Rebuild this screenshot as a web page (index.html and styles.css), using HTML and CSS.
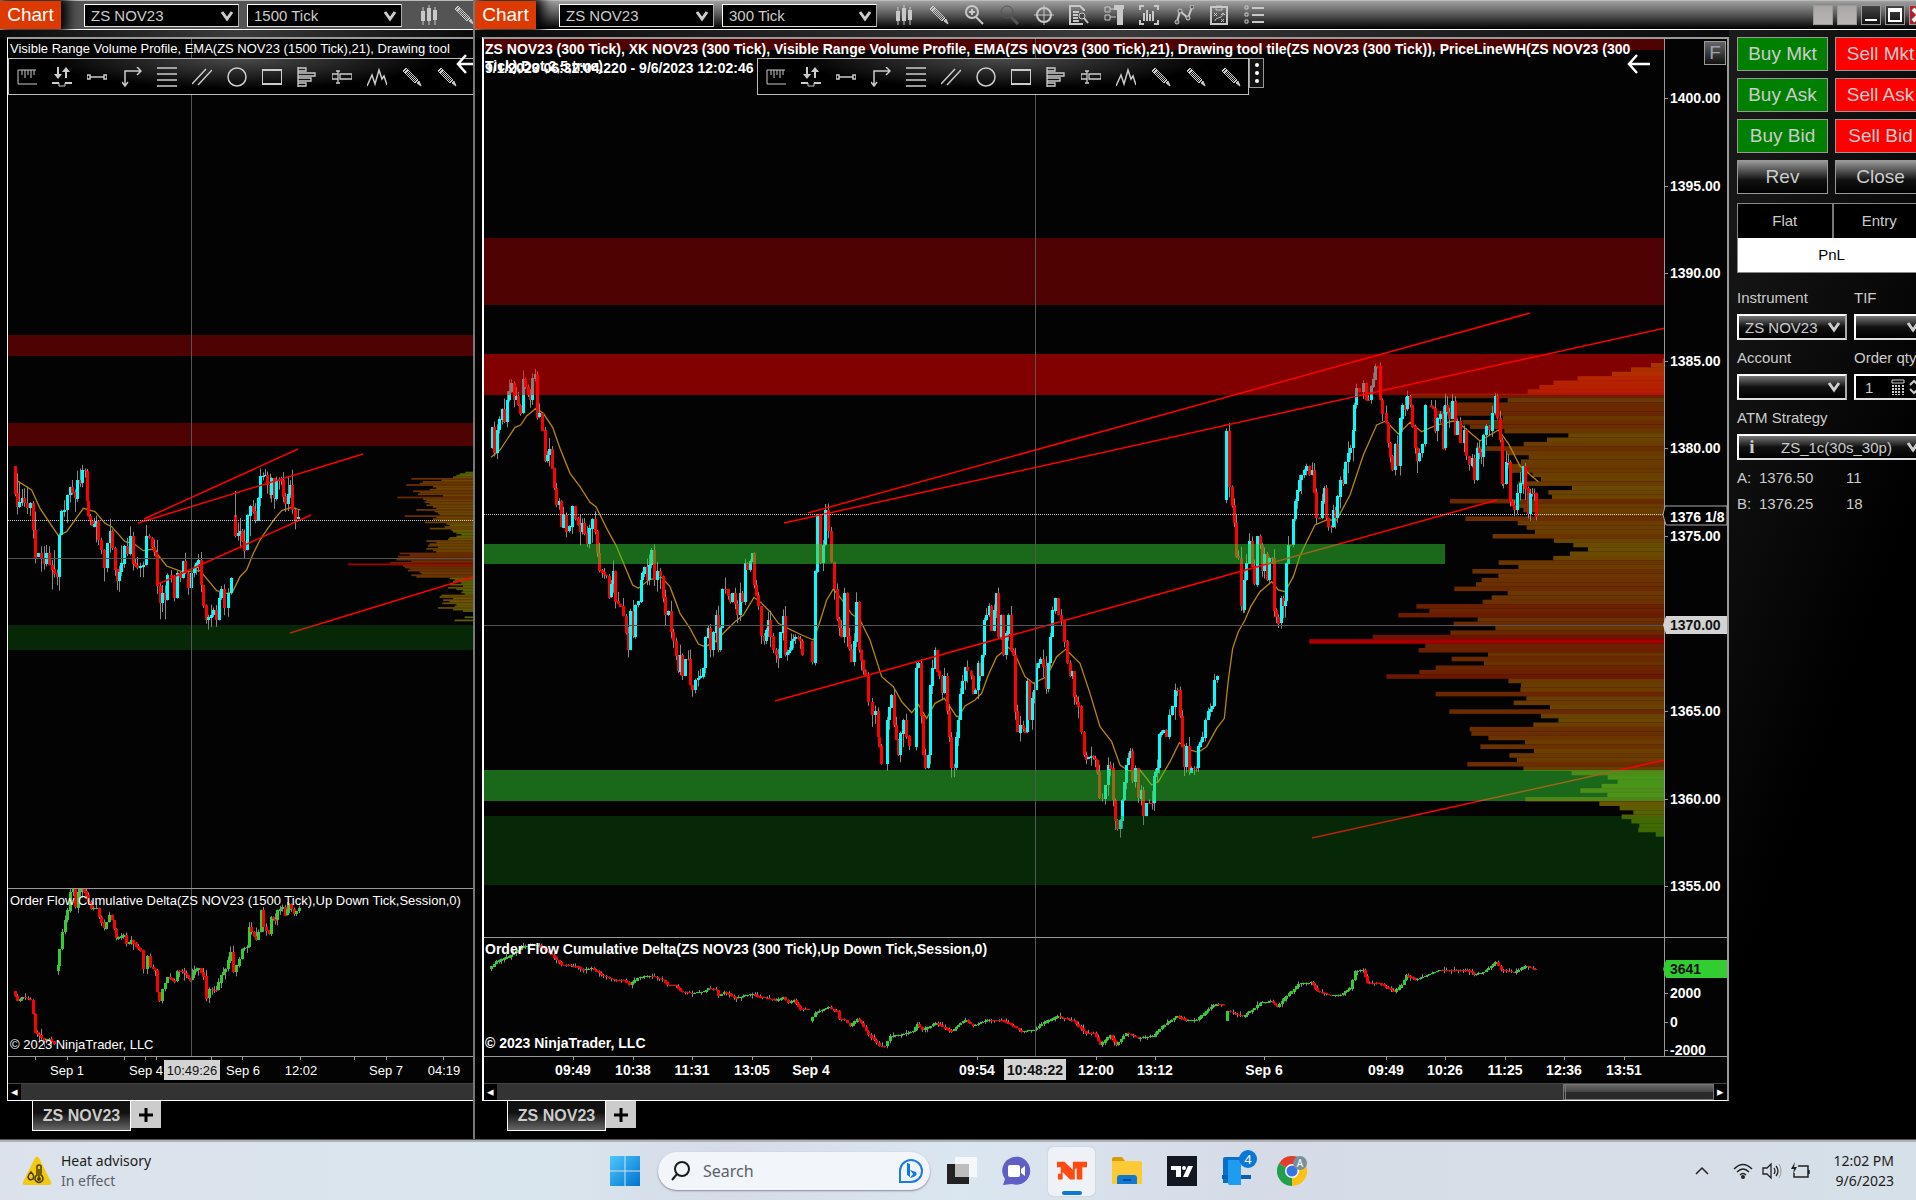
FILE: index.html
```html
<!DOCTYPE html>
<html lang="en">
<head>
<meta charset="utf-8">
<title>Chart - ZS NOV23</title>
<link rel="stylesheet" href="styles.css">
</head>
<body>
<svg class="sprite" aria-hidden="true">
  <symbol id="candles" viewBox="0 0 20 20"><path d="M4 2v18M10 0v20M16 2v18" stroke="currentColor"/><path d="M2 6h4v10H2zM8 3h4v13H8zM14 5h4v10h-4z" fill="currentColor"/></symbol>
  <symbol id="pencil" viewBox="0 0 20 20"><path d="M1 4l3-3 12 12-3 3z" fill="none" stroke="currentColor"/><path d="M2 3l12 12M3 2l12 12M15 16l2-2 2 5zM3 6l3-3" stroke="currentColor" fill="currentColor"/></symbol>
  <symbol id="zoomin" viewBox="0 0 20 20"><circle cx="8" cy="7" r="6" fill="none" stroke="currentColor" stroke-width="2"/><path d="M5 7h6M8 4v6M12 12l7 7" stroke="currentColor" stroke-width="2"/></symbol>
  <symbol id="zoomout" viewBox="0 0 20 20"><circle cx="8" cy="7" r="6" fill="none" stroke="currentColor"/><path d="M12 12l7 7" stroke="currentColor" stroke-width="3"/></symbol>
  <symbol id="target" viewBox="0 0 20 20"><circle cx="10" cy="10" r="7" fill="none" stroke="currentColor" stroke-width="2"/><path d="M10 0v20M0 10h20" stroke="currentColor"/></symbol>
  <symbol id="docfind" viewBox="0 0 20 20"><path d="M15 6V5l-4-4H1v18h13M4 7h6M4 10h5M4 13h5M4 16h6" fill="none" stroke="currentColor" stroke-width="2"/><circle cx="13" cy="11" r="3" fill="#444" stroke="currentColor"/><path d="M15 13l4 5" stroke="currentColor" stroke-width="2"/></symbol>
  <symbol id="dock" viewBox="0 0 20 20"><path d="M1 2h5v5H1zM1 10h5v5H1zM6 4h6M6 12h6" fill="none" stroke="currentColor"/><path d="M10 0h10v4h-1v16h-6V5h-3z" fill="currentColor"/></symbol>
  <symbol id="barsbox" viewBox="0 0 20 20"><path d="M5 1H1v4M15 1h4v4M1 15v4h4M15 19h4v-4M5 8v8M8 5v11M11 9v7M14 6v10" fill="none" stroke="currentColor" stroke-width="2"/></symbol>
  <symbol id="nodes" viewBox="0 0 20 20"><path d="M3 17L6 6l8 7 4-11" fill="none" stroke="currentColor" stroke-width="2"/><g fill="#555" stroke="currentColor"><circle cx="3" cy="17" r="2"/><circle cx="6" cy="6" r="2"/><circle cx="14" cy="13" r="2"/><circle cx="18" cy="2" r="2"/></g></symbol>
  <symbol id="plan" viewBox="0 0 20 20"><path d="M2 2h16v17H2z" fill="none" stroke="currentColor" stroke-width="2"/><path d="M7 1h6v4H7zM5 8l3 3M8 8l-3 3M12 14l3 3M15 14l-3 3M6 16c0-4 7-2 8-7M12 10l2-2 2 2" fill="none" stroke="currentColor"/></symbol>
  <symbol id="list" viewBox="0 0 20 20"><path d="M1 1h3v3H1zM1 8h3v3H1zM1 15h3v3H1z" fill="none" stroke="currentColor"/><path d="M8 3h12M8 10h12M8 17h12" stroke="currentColor" stroke-width="2"/></symbol>
  <symbol id="ruler" viewBox="0 0 20 20"><path d="M20 17H1V3h18M5 3v5M8 3v8M11 3v5M14 3v8M17 3v5" fill="none" stroke="currentColor"/></symbol>
  <symbol id="updown" viewBox="0 0 20 20"><path d="M6 0v8M14 3v8" stroke="currentColor" stroke-width="2"/><path d="M2 7h8l-4 5zM10 5h8l-4-5zM0 15h7v2H0zM13 15h7v2h-7z" fill="currentColor"/><path d="M7 16v3h6v-3" fill="none" stroke="currentColor"/></symbol>
  <symbol id="segment" viewBox="0 0 20 20"><path d="M0 8h3v4H0zM17 8h3v4h-3zM3 10h14" fill="none" stroke="currentColor" stroke-width="1.5"/></symbol>
  <symbol id="elbow" viewBox="0 0 20 20"><path d="M3 18V4h15M0 15l3 4 3-4M15 0l4 4-4 4" fill="none" stroke="currentColor" stroke-width="1.5"/></symbol>
  <symbol id="lines" viewBox="0 0 20 20"><path d="M0 1h20M0 7h20M0 13h20M0 19h20" stroke="currentColor" stroke-width="1.5"/></symbol>
  <symbol id="parallel" viewBox="0 0 20 20"><path d="M0 17L14 2M6 18L20 3" stroke="currentColor" stroke-width="1.5"/></symbol>
  <symbol id="circle" viewBox="0 0 20 20"><circle cx="10" cy="10" r="9" fill="none" stroke="currentColor" stroke-width="1.5"/></symbol>
  <symbol id="rect" viewBox="0 0 20 20"><path d="M0 3h20v14H0z" fill="none" stroke="currentColor" stroke-width="2"/></symbol>
  <symbol id="profile" viewBox="0 0 20 20"><path d="M1 0v20M1 1h8v3H1M1 6h17v3H1M1 11h13v3H1M1 16h8v3H1" fill="none" stroke="currentColor" stroke-width="1.3"/></symbol>
  <symbol id="slider" viewBox="0 0 20 20"><path d="M6 4v12M4 4h4M4 16h4M0 7h6M0 12h6M0 7v5M8 7h12v5H8z" fill="none" stroke="currentColor" stroke-width="1.3"/></symbol>
  <symbol id="mountain" viewBox="0 0 20 20"><path d="M0 19l5-11 3 9 4-14 3 9 2-3 3 9" fill="none" stroke="currentColor" stroke-width="1.5"/></symbol>
  <symbol id="chev" viewBox="0 0 14 12"><path d="M2 2l5 7 5-7" fill="none" stroke="currentColor" stroke-width="3"/></symbol>
  <symbol id="back" viewBox="0 0 24 20"><path d="M23 10H2M10 1l-8 9 8 9" fill="none" stroke="#fff" stroke-width="2.5"/></symbol>
</svg>

<main class="desk">
  <section class="win win-left">
    <header class="bar">
      <span class="badge">Chart</span>
      <label class="combo wide"><select aria-label="Instrument"><option>ZS NOV23</option></select><svg><use href="#chev"/></svg></label>
      <label class="combo wide"><select aria-label="Interval"><option>1500 Tick</option></select><svg><use href="#chev"/></svg></label>
      <div class="icons"><svg><use href="#candles"/></svg><svg><use href="#pencil"/></svg></div>
    </header>
    <div class="col">
      <div class="panel">
        <div class="title">Visible Range Volume Profile, EMA(ZS NOV23 (1500 Tick),21), Drawing tool</div>
        <div class="tools" id="tools-left"></div>
        <svg class="arrow arrow-left"><use href="#back"/></svg>
        <svg class="price" id="price-left"></svg>
        <svg class="delta delta-left" id="delta-left"></svg>
        <svg class="time" id="time-left"></svg>
        <div class="scroll"><button aria-label="Scroll left">◂</button></div>
      </div>
      <nav class="tabs"><button class="tab">ZS NOV23</button><button class="plus" aria-label="Add tab"><svg viewBox="0 0 14 14"><path d="M7 0v14M0 7h14" stroke="#000" stroke-width="3"/></svg></button></nav>
    </div>
  </section>

  <section class="win win-right">
    <header class="bar">
      <span class="badge">Chart</span>
      <label class="combo wide"><select aria-label="Instrument"><option>ZS NOV23</option></select><svg><use href="#chev"/></svg></label>
      <label class="combo wide"><select aria-label="Interval"><option>300 Tick</option></select><svg><use href="#chev"/></svg></label>
      <div class="icons"><svg><use href="#candles"/></svg><svg><use href="#pencil"/></svg><svg><use href="#zoomin"/></svg><svg class="dim"><use href="#zoomout"/></svg><svg><use href="#target"/></svg><svg><use href="#docfind"/></svg><svg><use href="#dock"/></svg><svg><use href="#barsbox"/></svg><svg><use href="#nodes"/></svg><svg><use href="#plan"/></svg><svg><use href="#list"/></svg></div>
      <div class="caption"><i></i><i></i><button aria-label="Minimize"><svg viewBox="0 0 18 18"><path d="M3 14h12" stroke="#fff" stroke-width="2"/></svg></button><button aria-label="Maximize"><svg viewBox="0 0 18 18"><path d="M3 3h12v12H3zM3 5h12" fill="none" stroke="#fff" stroke-width="2"/></svg></button><button class="close" aria-label="Close"><svg viewBox="0 0 18 18"><path d="M3 3l12 12M15 3L3 15" stroke="#fff" stroke-width="4"/></svg></button></div>
    </header>
    <div class="split">
      <div class="col">
        <div class="panel">
          <div class="title">ZS NOV23 (300 Tick), XK NOV23 (300 Tick), Visible Range Volume Profile, EMA(ZS NOV23 (300 Tick),21), Drawing tool tile(ZS NOV23 (300 Tick)), PriceLineWH(ZS NOV23 (300</div>
          <div class="sub sub-a">Tick),Dot,2,5,true)</div>
          <div class="sub">9/1/2023 06:32:04.220 - 9/6/2023 12:02:46</div>
          <div class="tools" id="tools-right"></div>
          <div class="grip"><i></i><i></i><i></i></div>
          <svg class="arrow arrow-right"><use href="#back"/></svg>
          <button class="fbtn">F</button>
          <div class="pane price"><svg id="price-right"></svg><svg class="axis" id="axis-right"></svg></div>
          <div class="pane delta delta-right"><svg id="delta-right"></svg><svg class="axis" id="daxis-right"></svg></div>
          <svg class="time" id="time-right"></svg>
          <div class="scroll"><button aria-label="Scroll left">◂</button><span class="thumb"></span><button aria-label="Scroll right">▸</button></div>
        </div>
        <nav class="tabs"><button class="tab">ZS NOV23</button><button class="plus" aria-label="Add tab"><svg viewBox="0 0 14 14"><path d="M7 0v14M0 7h14" stroke="#000" stroke-width="3"/></svg></button></nav>
      </div>
      <aside class="trader">
        <div class="trader-body">
          <div class="orders">
            <button class="buy">Buy Mkt</button><button class="sell">Sell Mkt</button>
            <button class="buy">Buy Ask</button><button class="sell">Sell Ask</button>
            <button class="buy">Buy Bid</button><button class="sell">Sell Bid</button>
            <button class="plain">Rev</button><button class="plain">Close</button>
          </div>
          <div class="position"><span>Flat</span><span>Entry</span><b>PnL</b></div>
          <div class="fields">
            <label for="inst">Instrument</label><label for="tif">TIF</label>
            <div class="combo"><select id="inst"><option>ZS NOV23</option></select><svg><use href="#chev"/></svg></div>
            <div class="combo"><select id="tif"><option></option></select><svg><use href="#chev"/></svg></div>
            <label for="acct">Account</label><label for="qty">Order qty</label>
            <div class="combo"><select id="acct"><option></option></select><svg><use href="#chev"/></svg></div>
            <div class="combo qty"><input id="qty" value="1"><svg class="calc" viewBox="0 0 14 16"><path d="M1 1h12v3H1z" fill="none" stroke="#ccc"/><path d="M2 6v10M5 6v10M8 6v10M12 6v10" stroke="#ccc" stroke-width="2" stroke-dasharray="2 1"/></svg><svg class="spin" viewBox="0 0 10 16"><path d="M1 6l4-4 4 4M1 10l4 4 4-4" fill="none" stroke="#ccc" stroke-width="2"/></svg></div>
            <label class="full" for="atm">ATM Strategy</label>
            <div class="combo full atm"><span class="info">i</span><select id="atm"><option>ZS_1c(30s_30p)</option></select><svg><use href="#chev"/></svg></div>
          </div>
          <div class="quotes"><span>A:</span><span>1376.50</span><span>11</span><span>B:</span><span>1376.25</span><span>18</span></div>
        </div>
      </aside>
    </div>
  </section>
</main>

<footer class="taskbar">
  <div class="weather">
    <svg viewBox="0 0 30 30"><path d="M13 2q2-3 4 0l12 24q1 3-2 3H3q-3 0-2-3z" fill="#f2c811"/><path d="M15 10q2-2 4 0v9a4 4 0 1 1-4 0zM17 13v8" fill="none" stroke="#4a3c00" stroke-width="1.5"/><circle cx="17" cy="23" r="2" fill="#4a3c00"/><path d="M9 16q4 4 2 7-4 2-5-2 0-2 3-5z" fill="none" stroke="#4a3c00" stroke-width="1.5"/></svg>
    <div>Heat advisory<small>In effect</small></div>
  </div>
  <div class="apps">
    <button class="app" aria-label="Start"><svg viewBox="0 0 30 30"><defs><linearGradient id="wg" x2="1" y2="1"><stop stop-color="#4cc8fb"/><stop offset="1" stop-color="#0272cf"/></linearGradient></defs><path d="M0 0h14.500v14.500H0zM15.500 0H30v14.500H15.500zM0 15.500h14.500V30H0zM15.500 15.500H30V30H15.500z" fill="url(#wg)"/></svg></button>
    <label class="search"><svg viewBox="0 0 20 20"><circle cx="11" cy="8" r="7" fill="none" stroke="#1b1b1f" stroke-width="2"/><path d="M6 13l-5 6" stroke="#1b1b1f" stroke-width="2"/></svg><input placeholder="Search" aria-label="Search"><svg class="bing" viewBox="0 0 26 26"><path d="M2 24V13A11 11 0 1 1 13 24z" fill="#eef6fd" stroke="#1b7be0" stroke-width="2"/><path d="M9 5l3 1v13l-3-2zM12 12l6 2c2 3-1 5-6 6l3-4z" fill="#1577e0"/></svg></label>
    <button class="app" aria-label="Task view"><svg viewBox="0 0 30 30"><path d="M0 8h22v20H0z" fill="#222"/><path d="M8 1h22v20H8z" fill="#fff" opacity=".7"/></svg></button>
    <button class="app" aria-label="Chat"><svg viewBox="0 0 30 30"><path d="M1 29l2-6A14 14 0 1 1 10 28z" fill="#5f5fc4"/><rect x="6" y="9" width="12" height="12" rx="2" fill="#fff"/><path d="M19 13l4-3v10l-4-3z" fill="#fff"/></svg></button>
    <button class="app active" aria-label="NinjaTrader"><svg viewBox="0 0 32 30"><path d="M0 5h8l9 9V5h15v6h-5v13h-6V12l-2 1v11h-5l-8-8v8H1v-6h3v-7H0z" fill="#ff4a12"/></svg></button>
    <button class="app" aria-label="Files"><svg viewBox="0 0 30 30"><path d="M0 3q0-2 2-2h8l3 4H0z" fill="#d99a08"/><path d="M0 5h28q2 0 2 2v20q0 1-1 1H0z" fill="#fdc936"/><path d="M5 28v-6q0-3 3-3h14q3 0 3 3v6z" fill="#0f7ad0"/><path d="M11 24h8" stroke="#054d90" stroke-width="2"/></svg></button>
    <button class="app" aria-label="TradingView"><svg viewBox="0 0 30 30"><path d="M0 0h30v30H0z" fill="#131722"/><path d="M4 10h10v11H9v-7H4zM21 10h5l-5 11h-5z" fill="#fff"/><circle cx="17" cy="12" r="2" fill="#fff"/></svg></button>
    <button class="app" aria-label="Phone Link"><svg viewBox="0 0 30 30"><path d="M1 3q0-2 2-2h15v26H1z" fill="#0a6fc8"/><path d="M0 19h29v4H0z" fill="#0b5fae"/><path d="M6 4h13v25H8q-2 0-2-2z" fill="#1d9cf0"/></svg><span class="count">4</span></button>
    <button class="app" aria-label="Chrome"><svg viewBox="0 0 30 30"><path d="M15 15L2 7.500A15 15 0 0 1 28 7.500z" fill="#e33b2e"/><path d="M15 15H15L28 7.500A15 15 0 0 1 15 30z" fill="#fbc116"/><path d="M15 15v15A15 15 0 0 1 2 7.500z" fill="#229f4b"/><circle cx="15" cy="15" r="7" fill="#fff"/><circle cx="15" cy="15" r="5.500" fill="#3574e2"/></svg><span class="avatar">A</span></button>
  </div>
  <div class="tray">
    <svg class="up" viewBox="0 0 16 16"><path d="M2 11l6-6 6 6" fill="none" stroke="#222" stroke-width="1.5"/></svg>
    <svg viewBox="0 0 20 18"><g fill="none" stroke="#222" stroke-width="1.500"><path d="M1 7q9-9 18 0M4 10q6-6 12 0M7 13q3-3 6 0"/></g><circle cx="10" cy="15" r="2" fill="#222"/></svg>
    <svg viewBox="0 0 20 18"><path d="M1 6v6h4l4 4V2L5 6zM12 6q2 3 0 6M14 4q4 5 0 10" fill="none" stroke="#222" stroke-width="1.300"/><path d="M17 2q4 7 0 14" fill="none" stroke="#999"/></svg>
    <svg viewBox="0 0 20 18"><path d="M7 4h10v11H3v-4M18 8v4" fill="none" stroke="#222" stroke-width="1.500"/><path d="M4 0L0 7h3l-1 5 4-7H3z" fill="#222"/></svg>
    <div class="clock">12:02 PM<br>9/6/2023</div>
  </div>
</footer>
<script src="charts.js"></script>
</body>
</html>
```
FILE: styles.css
```css
* { box-sizing: border-box; }
body {
  margin: 0;
  height: 100vh;
  display: flex;
  flex-direction: column;
  overflow: hidden;
  background: #000;
  color: #fff;
  font-family: "Liberation Sans", Arial, sans-serif;
  font-size: 15px;
}
button, input, select { font: inherit; color: inherit; margin: 0; padding: 0; }
.sprite { position: absolute; width: 0; height: 0; }

.desk { flex: 1; min-height: 0; display: flex; border-bottom: 1px solid #555; }
.win { display: flex; flex-direction: column; min-width: 0; overflow: hidden; }
.win-left { flex: 0 0 475px; border-right: 2px solid #777; }
.win-right { flex: 1; }

.bar {
  height: 30px;
  flex: none;
  display: flex;
  align-items: center;
  gap: 8px;
  border-top: 1px solid #bbb;
  border-bottom: 1px solid #fff;
  background: linear-gradient(#a0a0a0, #555 50%, #000);
}
.win-left .bar { background: #545454; }
.badge {
  align-self: stretch;
  flex: 0 0 61px;
  margin-right: 15px;
  background: #dc3a00;
  box-shadow: 3px 0 12px 4px #000;
  font-size: 19px;
  line-height: 28px;
  text-align: center;
}
.combo {
  position: relative;
  display: flex;
  height: 26px;
  border: 2px solid #aaa;
  border-color: #fff #aaa #ddd #fff;
  background: linear-gradient(#777, #111 50%, #000);
  color: #ccc;
}
.combo select, .combo input {
  flex: 1;
  width: 100%;
  min-width: 0;
  appearance: none;
  border: 0;
  outline: 0;
  background: none;
  padding: 0 6px;
}
.combo > svg { position: absolute; right: 4px; top: 5px; width: 14px; height: 12px; pointer-events: none; }
.wide { flex: 0 0 155px; height: 23px; border-width: 1px; background: #000; }
.icons { display: flex; gap: 15px; margin-left: 9px; color: #c8c8c8; }
.icons svg { flex: none; width: 20px; height: 20px; }
.icons .dim { color: #555; }
.caption { display: flex; gap: 4px; margin-left: auto; margin-right: -13px; }
.caption > * { width: 20px; height: 20px; border: 1px solid #999; background: linear-gradient(#444, #111); }
.caption i { background: linear-gradient(#aaa6a6, #bbb6b6); }
.caption button svg { display: block; width: 18px; height: 18px; }
.caption .close { background: #b3202c; }

.split { flex: 1; display: flex; min-height: 0; }
.col { flex: 1; min-width: 0; min-height: 0; display: flex; flex-direction: column; padding: 7px 0 8px 7px; background: linear-gradient(90deg, #0a0a0a, #3a3a3a 50%, #0a0a0a) top / 100% 8px no-repeat; }
.panel {
  position: relative;
  flex: 1;
  min-height: 0;
  display: flex;
  flex-direction: column;
  border-top: 2px solid #999;
  border-left: 1px solid #fff;
  border-bottom: 1px solid #fff;
  background: #030303;
}
.win-right .panel { border-right: 2px solid #999; border-left-width: 2px; }
.panel svg { display: block; }
.price { flex: 1; min-height: 0; width: 100%; }
.pane { display: flex; }
.pane > svg { flex: 1; height: 100%; min-width: 0; }
.pane > .axis { flex: 0 0 63px; border-left: 1px solid #999; overflow: visible; }
.delta { flex: none; width: 100%; border-top: 1px solid #999; }
.delta-left { height: 168px; }
.delta-right { height: 119px; }
.time { flex: none; width: 100%; height: 27px; border-top: 1px solid #999; }
.title, .sub { position: absolute; left: 2px; z-index: 2; white-space: nowrap; font-size: 13px; line-height: 16px; }
.title { top: 2px; }
.sub { top: 21px; }
.sub-a { top: 19px; }
.win-right .title, .win-right .sub { left: 1px; font-size: 14px; font-weight: bold; }
svg text { fill: #fff; font-size: 13px; }
.win-right svg text { font-size: 14px; font-weight: bold; }
svg text.dark, .win-right svg text.dark { fill: #111; }

.tools {
  position: absolute;
  z-index: 3;
  top: 19px;
  left: 0;
  right: 0;
  height: 37px;
  display: flex;
  align-items: center;
  gap: 15px;
  padding-left: 8px;
  overflow: hidden;
  border: 1px solid #bbb;
  border-right: 0;
  background: radial-gradient(ellipse at 50% 0, #4a4a4a, #000 60%);
  color: #ccc;
}
#tools-right { left: 273px; right: auto; width: 492px; border-right: 1px solid #bbb; }
.tools button { flex: none; border: 0; background: none; width: 20px; height: 20px; }
.tools svg { width: 20px; height: 20px; }
.grip { position: absolute; z-index: 3; top: 19px; left: 765px; width: 15px; height: 30px; border: 1px solid #999; background: #111; display: flex; flex-direction: column; align-items: center; justify-content: space-evenly; }
.grip i { width: 4px; height: 4px; border-radius: 2px; background: #fff; }
.arrow { position: absolute; z-index: 4; top: 15px; width: 24px; height: 20px; }
.arrow-left { right: -7px; }
.arrow-right { right: 76px; }
.fbtn { position: absolute; z-index: 3; top: 2px; right: 1px; width: 22px; height: 24px; border: 1px solid #999; background: linear-gradient(#666, #111); color: #9aa3b5; font-size: 19px; line-height: 20px; }

.scroll { display: flex; flex: none; height: 17px; background: #333; border-top: 1px solid #444; }
.scroll button { width: 13px; border: 0; background: #000; font-size: 13px; line-height: 14px; }
.scroll .thumb { width: 151px; margin-left: auto; border: 1px solid #777; border-left: 3px double #777; background: linear-gradient(#666, #444 50%, #2a2a2a 50%); }
.tabs { display: flex; align-items: flex-start; flex: none; height: 30px; margin-left: 25px; }
.tab { width: 99px; height: 30px; border: 1px solid #fff; border-top: 0; background: linear-gradient(#111 40%, #666); color: #ccc; font-size: 16px; font-weight: bold; }
.plus { width: 30px; height: 27px; border: 0; background: #ccc; }
.plus svg { width: 14px; height: 14px; margin: auto; display: block; }

.trader { flex: 0 0 187px; overflow: hidden; padding: 7px 0 0 8px; background: linear-gradient(110deg, #1c1c1c, #000 60%); }
.trader-body { width: 189px; color: #ccc; }
.orders { display: grid; grid-template-columns: 91px 91px; gap: 7px; }
.orders button { height: 34px; border: 1px solid #999; font-size: 19px; }
.orders .buy { background: #008000; }
.orders .sell { background: #f00; }
.orders .plain { background: linear-gradient(#999, #111 60%, #000); }
.position { margin-top: 9px; display: grid; grid-template-columns: 1fr 1fr; border: 1px solid #888; text-align: center; line-height: 34px; background: #000; }
.position span + span { border-left: 2px solid #777; }
.position b { grid-column: 1 / 3; background: #fff; color: #000; font-weight: normal; }
.fields { margin-top: 16px; display: grid; grid-template-columns: 110px 1fr; column-gap: 7px; }
.fields label { line-height: 17px; margin-bottom: 8px; }
.fields .combo { margin-bottom: 9px; }
.fields .full { grid-column: 1 / 3; }
.qty { background: #000; }
.qty input { padding-left: 9px; }
.combo .calc { right: 19px; top: 3px; height: 16px; }
.combo .spin { right: 5px; top: 3px; width: 10px; height: 16px; }
.info { width: 26px; text-align: center; font: bold 19px/22px "Liberation Serif", serif; }
.atm select { padding-left: 16px; }
.quotes { display: grid; grid-template-columns: 22px 87px 1fr; line-height: 26px; margin-top: -4px; }

.taskbar { flex: none; height: 60px; display: flex; align-items: center; padding: 0 22px; border-top: 2px solid #aeb0b5; background: linear-gradient(90deg, #dbe2ec, #dae6ee 28%, #d5dce8 38%, #dae6f0 50%, #d5dce7 65%, #d6e0e8); color: #1c1c20; font: 14px/20px "Noto Sans", sans-serif; }
.weather, .tray { flex: 1; display: flex; align-items: center; gap: 9px; }
.weather svg { width: 30px; height: 30px; }
.weather small { display: block; font-size: 14px; color: #5c6066; }
.apps { display: flex; align-items: center; gap: 8px; }
.app { position: relative; width: 47px; height: 49px; border: 0; background: none; display: flex; align-items: center; justify-content: center; }
.app svg { width: 30px; height: 30px; }
.active { background: #eef1f6; border-radius: 5px; box-shadow: 0 0 1px #999; }
.active::after { content: ""; position: absolute; bottom: 1px; width: 20px; height: 4px; border-radius: 2px; background: #0a78d6; }
.search { display: flex; align-items: center; gap: 12px; width: 272px; height: 38px; margin-left: 2px; padding: 0 6px 0 13px; border-radius: 19px; background: #f2f5f9; box-shadow: 0 1px 2px #889; }
.search input { flex: 1; min-width: 0; border: 0; background: none; font-size: 16px; }
.search input::placeholder { color: #5c6066; }
.search svg { width: 20px; height: 20px; }
.search .bing { width: 26px; height: 26px; }
.count, .avatar { position: absolute; top: 3px; right: 3px; width: 18px; height: 18px; border-radius: 9px; background: #0a78d6; color: #fff; font-size: 13px; line-height: 18px; text-align: center; }
.avatar { top: 9px; right: 8px; width: 14px; height: 14px; background: #78909c; font-size: 10px; line-height: 14px; }
.tray { justify-content: flex-end; }
.tray svg { width: 20px; height: 18px; }
.tray .up { width: 16px; height: 16px; margin-right: 14px; }
.clock { text-align: right; margin-left: 13px; }
```
FILE: charts.js
```js
const NS = 'http://www.w3.org/2000/svg';
const $ = id => document.getElementById(id);
function add(parent, tag, attrs, text) {
  const el = document.createElementNS(NS, tag);
  for (const k in attrs) el.setAttribute(k, attrs[k]);
  if (text !== undefined) el.textContent = text;
  parent.appendChild(el);
  return el;
}

let seed = 7;
function rnd() { seed = (seed * 16807) % 2147483647; return seed / 2147483647; }

// Swing points of a series: "x,y x,y"; "|" starts a new session.
// o is the block's origin, s its units per pixel.
function points(str, o, s) {
  return str.trim().split(/\s+/).map(p => {
    if (p === '|') return null;
    const [x, y] = p.split(',').map(Number);
    return [o[0] + x / s[0], o[1] + y / s[1]];
  });
}

function candles(g, pts, step, up, down, wick) {
  let prev = null;
  const wicks = add(g, 'g', { fill: '#888' });
  for (const p of pts) {
    if (!p || !prev) { prev = p; continue; }
    const n = Math.max(1, Math.round((p[0] - prev[0]) / step));
    for (let i = 0; i < n; i++) {
      const a = prev[1] + (p[1] - prev[1]) * i / n;
      const b = prev[1] + (p[1] - prev[1]) * (i + 1) / n;
      const x = Math.round(prev[0] + (p[0] - prev[0]) * (i + 0.5) / n);
      const t = Math.floor(Math.min(a, b)), h = Math.max(1, Math.ceil(Math.abs(a - b)));
      const w1 = rnd() * rnd() * wick, w2 = rnd() * rnd() * wick;
      add(wicks, 'rect', { x: x, y: t - w1, width: 1, height: h + w1 + w2 });
      add(g, 'rect', { x: x - 1, y: t, width: 3, height: h, fill: b < a ? up : down });
    }
    prev = p;
  }
}

function curve(g, pts) {
  add(g, 'polyline', { points: pts.map(p => p.join()).join(' '), fill: 'none', stroke: '#b8860b', 'stroke-width': 1.3 });
}

function barColor(w) {
  if (w >= 1) return '#a80000';
  if (w < 0.2) return `rgb(${70 + w * 185},${105 - w * 90},0)`;
  return `rgb(107,${Math.round(98 - w * 95)},0)`;
}

// Volume profile, anchored to the right edge of the pane.
function profile(svg, lefts, edge, unit, top, row) {
  const box = add(svg, 'svg', { x: '100%', overflow: 'visible' });
  const max = edge - Math.min(...lefts);
  lefts.forEach((l, i) => {
    const w = (edge - l) / unit;
    add(box, 'rect', { x: -w, y: top + i * row, width: w, height: row + 0.2, fill: barColor((edge - l) / max) });
  });
}

function bands(svg, list) {
  for (const [y, h, fill, w] of list) add(svg, 'rect', { x: 0, y, width: w || '100%', height: h, fill });
}
function trend(g, list) {
  for (const [x1, y1, x2, y2] of list) add(g, 'line', { x1, y1, x2, y2, stroke: '#f00', 'stroke-width': 1.5 });
}
function cross(svg, x, y, dotted) {
  add(svg, 'rect', { x, y: 0, width: 1, height: '100%', fill: '#555' });
  if (y) add(svg, 'rect', { x: 0, y, width: '100%', height: 1, fill: '#555' });
  if (dotted) add(svg, 'line', { x1: 0, x2: '100%', y1: dotted, y2: dotted, stroke: '#ccc', 'stroke-dasharray': '1 1' });
}

const DARK_RED = 'rgba(255,0,0,.3)', RED = 'rgba(255,0,0,.5)';
const GREEN = 'rgba(50,205,50,.5)', DARK_GREEN = 'rgba(12,125,12,.3)';
const third = [3, 3];

// ---- 300 tick chart ----
{
  const svg = $('price-right');
  const g0 = [-4, 301], g1 = [416, 361], g2 = [766, 301];
  profile(svg, [1240,1205,1145,1088,985,913,870,835,485,775,600,600,560,760,640,662,765,957,893,823,680,770,838,815,770,780,850,875,807,968,897,908,602,800,822,857,648,805,832,857,730,914,972,1016,962,912,748,807,669,747,697,680,615,775,727,700,501,540,447,685,613,738,603,370,180,528,508,716,607,704,559,510,411,777,815,813,559,831,793,902,600,875,927,852,661,666,717,827,693,854,780,803,654,822,967,1075,1105,1057,993,1074,828,1050,1111,1152,1117,1146,1170,1167,1219], 1244, 3, 319.6, 4.384);
  const g = add(svg, 'g', {});
  const price = [
    ...points('35,325 38,262 48,338 55,270 68,208 76,245 85,180 97,130 105,180 112,170 124,220 133,118 146,165 153,180 160,115 168,102 174,232 182,220 190,272 197,363 210,328 220,385 225,445 233,495 240,485 247,562 253,525 262,575 272,560 282,498 290,535 303,575 310,550 323,613 333,565 340,537 350,575 354,640 362,692 375,705 383,708 390,772 402,695 410,785 425,800 435,828 447,930 455,815 460,890 470,795 480,785 483,720 495,683 505,720 517,630 524,720 535,695 545,708 552,772 560,825 570,815 575,878 585,905 597,995 603,945 610,1008 618,958 628,958 632,1035 640,1048 650,1020 665,1010 672,985 680,893 688,865 694,930 705,878 712,825 718,930 724,865 730,748 740,748 752,785 762,760 775,825 783,760 790,785 797,670 805,690 820,640 826,735 838,800 847,890 855,903 867,840 875,890 885,930 897,955 905,878 911,828 916,943 930,930 935,903 950,893 962,903 968,943 | 990,905 1000,968 1007,695 1017,525 1023,668 1032,615 1040,512 1048,575 1058,668 1068,748 1073,838 1088,890 1097,760 1103,890 1117,968 1125,905 1132,787 1140,930 1152,995 1160,1010 1170,1088 1180,1125 1190,1115 1195,1192 1200,1220 1208,1272 | 1218,1272 1225,1140 1237,1065 1245,1155 1258,1245 1263,1180 1272,1140 1283,1190 1293,1220 | 1304,1220 1310,985 1320,970 1323,1128 1332,1245 1340,1283 1347,1245 1350,1037 1360,985 1367,930 1372,995 1383,1010 1388,1060 1397,1010 1403,1115 1410,1192 1417,1283 1425,1283 1430,1192', g0, third),
    ...points('175,960 183,882 190,845 197,803 207,815 217,830 222,882 230,870 235,790 242,828 250,765 254,660 264,645 270,620 278,695 285,632 292,580 298,712 305,645 314,765 320,700 328,645 335,752 343,765 348,935 355,998 365,975 372,985 380,998 384,845 392,960 398,895 404,870 410,805 425,778 433,800 441,867 447,790 453,712 460,632 468,595 477,645 488,660 497,725 505,790 512,828 520,815 525,892 538,920 546,998 555,1065 562,1078 575,1068 588,1080 595,1118 600,1195 610,1197 620,1155 625,1095 636,1105 642,1200 648,1262 655,1288 662,1262 668,1200 680,1095 693,1055 700,1145 710,1105 718,1195 725,1170 733,1248 742,1210 752,1210 760,1210 763,1130 775,1105 780,1003 793,990 803,1010 812,945 822,920 827,870 836,870 842,948 848,1040 855,1103 862,1040 870,1118 878,1105 890,1105 895,1040 910,1012 920,960 925,935 940,920 945,842 955,830 | 976,300 981,95 | 984,95 992,262 998,317 1005,370 1010,470 1018,475 1025,617 1030,630 1032,540 1042,490 1052,423 1058,500 1068,553 1075,408 1082,435 1088,512 1096,462 1104,540 1112,475 1120,475 1125,632 1138,670 1145,595 1152,617 1158,603 1160,490 1167,435 1175,435 1180,357 1188,305 1200,240', g1, third),
    ...points('158,405 173,380 183,405 190,390 196,458 202,535 213,535 218,485 224,445 230,535 238,562 248,562 252,512 258,535 265,470 275,420 284,430 288,367 297,340 305,325 310,272 315,195 322,145 333,155 343,130 350,180 360,180 366,140 373,118 378,78 386,80 392,180 402,220 412,250 416,310 424,350 430,390 438,313 446,377 452,235 460,195 467,208 474,170 484,195 490,260 498,325 503,363 510,340 520,313 528,197 | 540,197 553,205 558,272 565,235 573,222 582,325 588,197 600,235 610,183 618,285 626,245 636,310 645,272 652,350 662,377 668,355 676,418 684,325 697,350 702,285 712,260 722,272 730,220 737,170 745,235 752,300 757,430 763,430 770,367 778,367 782,485 797,510 806,460 815,430 820,378 830,445 838,522 843,460 855,460 862,530', g2, third)
  ];
  curve(g, [
    ...points('33,352 60,330 80,300 105,262 122,255 140,228 168,205 190,220 218,262 240,325 270,400 300,440 330,487 348,500 380,565 410,620 435,680 458,735 475,745 510,718 545,712 570,740 600,820 630,865 655,912 675,920 705,905 730,880 765,845 790,825 822,772 840,785 870,815 895,850 930,868 965,885 1000,900 1015,860 1040,780 1060,747 1085,778 1115,822 1140,840 1170,900 1205,1010 1240,1040 1265,1085 1295,1118 1315,1093 1340,1135 1365,1090 1393,1075 1430,1130', g0, third),
    ...points('178,948 195,918 225,900 245,880 265,825 290,770 325,742 345,762 375,830 400,850 440,830 470,770 497,748 540,790 570,880 600,980 635,1025 660,1095 685,1112 720,1110 755,1155 775,1145 810,1085 838,1028 870,1050 895,1057 920,1040 950,985 973,955 985,840 998,745 1015,695 1035,660 1052,620 1080,575 1115,545 1135,570 1155,575 1180,530 1200,467', g1, third),
    ...points('170,605 195,555 230,540 260,540 300,465 340,345 380,255 408,243 445,282 480,247 515,275 560,255 610,243 640,260 690,303 745,270 775,310 810,378 865,425', g2, third)
  ]);
  candles(g, price, 2.45, '#0ff', '#f00', 14);
  trend(g, [[324, 474, 1046, 274], [300, 484, 1181, 289], [291, 662, 1013, 461], [828, 799, 1181, 721]]);
  bands(svg, [[0, 11, DARK_RED], [199, 67, DARK_RED], [315, 41, RED], [505, 20, GREEN, 961], [731, 31, GREEN], [777, 69, DARK_GREEN]]);
  cross(svg, 551, 586, 475.5);

  const ax = $('axis-right');
  for (let p = 1400, i = 0; p >= 1355; p -= 5, i++) {
    const y = Math.round(59 + i * 87.6);
    add(ax, 'rect', { x: 0, y, width: 3, height: 1, fill: '#999' });
    add(ax, 'text', { x: 5, y: y + 5 }, p.toFixed(2));
  }
  add(ax, 'path', { d: 'M0 467h62v19H1l-3-10z', fill: '#000', stroke: '#aaa' });
  add(ax, 'text', { x: 5, y: 483 }, '1376 1/8');
  add(ax, 'path', { d: 'M1 577h61v18H1l-3-9z', fill: '#d3d3d3' });
  add(ax, 'text', { x: 5, y: 591, class: 'dark' }, '1370.00');

  const d = $('delta-right');
  const dg = add(d, 'g', {});
  candles(dg, points('12,148 22,125 40,105 55,80 75,75 90,105 103,135 120,140 130,152 140,145 152,165 168,180 180,180 187,195 197,175 212,168 228,180 235,195 245,198 250,215 265,220 280,215 285,205 295,212 298,228 305,218 320,235 340,222 350,232 370,242 378,232 385,248 392,240 400,268 410,270 | 412,303 418,280 435,263 445,275 448,298 455,300 462,318 470,298 475,310 485,345 498,380 505,380 512,350 525,345 540,335 545,312 552,330 568,310 580,325 588,335 605,300 615,318 635,300 650,302 662,315 675,335 690,330 700,312 720,290 740,305 755,340 765,340 773,375 785,345 793,375 805,340 820,355 838,350 850,320 868,290 880,303 893,300 905,275 917,252 926,252 | 928,305 932,275 950,290 965,265 972,250 985,245 993,262 1005,228 1020,193 1035,188 1043,215 1060,228 1072,225 1083,205 1090,155 1100,150 1105,190 1120,190 1138,215 1148,195 1153,165 1165,180 1180,165 1195,150 1210,150 1230,150 1238,165 1250,158 1265,128 1272,150 1288,158 1302,138 1315,150', [-4, -18], [1.2444, 3]), 2.45, '#32cd32', '#f00', 4);
  cross(d, 551, 0);
  add(d, 'text', { x: 1, y: 16 }, 'Order Flow Cumulative Delta(ZS NOV23 (300 Tick),Up Down Tick,Session,0)');
  add(d, 'text', { x: 1, y: 110 }, '© 2023 NinjaTrader, LLC');
  const da = $('daxis-right');
  [[27, '4000'], [55, '2000'], [84, '0'], [112, '-2000']].forEach(([y, t]) => {
    add(da, 'rect', { x: 0, y, width: 3, height: 1, fill: '#999' });
    add(da, 'text', { x: 5, y: y + 5 }, t);
  });
  add(da, 'path', { d: 'M1 22h61v18H1l-3-9z', fill: '#32cd32' });
  add(da, 'text', { x: 5, y: 36, class: 'dark' }, '3641');

  const t = $('time-right');
  [[89, '09:49'], [149, '10:38'], [208, '11:31'], [268, '13:05'], [327, 'Sep 4'], [493, '09:54'], [612, '12:00'], [671, '13:12'], [780, 'Sep 6'], [902, '09:49'], [961, '10:26'], [1021, '11:25'], [1080, '12:36'], [1140, '13:51']].forEach(([x, s]) => {
    add(t, 'rect', { x, y: 0, width: 1, height: 3, fill: '#999' });
    add(t, 'text', { x, y: 18, 'text-anchor': 'middle' }, s);
  });
  add(t, 'rect', { x: 520, y: 2, width: 62, height: 21, fill: '#d3d3d3' });
  add(t, 'text', { x: 551, y: 18, 'text-anchor': 'middle', class: 'dark' }, '10:48:22');
}

// ---- 1500 tick chart ----
{
  const svg = $('price-left');
  const o = [-8, 391];
  profile(svg, [1397,1380,1370,1360,1235,1325,1270,1260,1220,1300,1310,1290,1240,1260,1255,1330,1193,1270,1280,1275,1290,1280,1300,1310,1250,1305,1315,1320,1215,1310,1300,1320,1275,1340,1350,1335,1290,1355,1360,1370,1385,1370,1350,1345,1280,1310,1290,1285,1315,1280,1300,1310,1200,1230,1195,1200,1190,1235,1170,1045,1210,1215,1230,1225,1260,1265,1235,1250,1350,1365,1360,1385,1350,1390,1345,1370,1390,1385,1395,1325,1320,1360,1330,1350,1328,1370,1365,1315,1360,1390,1420,1420,1420,1395,1420,1365], 1420, 3, 432.7, 1.556);
  const g = add(svg, 'g', {});
  curve(g, points('45,148 95,180 120,235 175,317 200,305 250,235 285,245 315,280 335,290 375,335 400,340 430,362 460,357 500,408 545,425 600,422 650,482 680,490 697,487 720,440 740,420 760,370 780,330 800,300 825,265 845,242 875,232 902,240', o, third));
  candles(g, points('42,108 48,190 55,230 68,205 85,235 95,220 100,300 110,382 120,370 135,403 143,370 152,405 165,430 175,440 180,315 188,245 197,240 205,195 213,172 228,205 235,150 243,160 250,122 258,125 261,215 268,260 280,290 292,275 298,330 308,360 315,412 325,340 333,305 340,355 347,418 355,453 367,400 378,348 385,370 395,318 402,400 415,415 433,405 441,320 452,325 458,352 470,380 474,470 483,520 490,490 497,510 507,435 517,440 527,505 537,430 545,445 550,395 560,430 570,475 578,430 590,400 598,390 605,465 612,527 622,570 635,555 645,540 653,570 660,505 668,478 678,535 688,490 697,445 | 702,255 710,318 722,305 735,362 745,257 753,228 762,245 770,272 777,205 785,140 797,137 805,165 812,195 816,145 825,205 833,150 845,150 852,200 860,222 872,165 880,240 890,268 900,262', o, third), 2.6, '#0ff', '#f00', 22);
  add(g, 'rect', { x: 227, y: 452, width: 1, height: 26, fill: '#888' });
  trend(g, [[136, 480, 290, 410], [130, 484, 355, 415], [148, 546, 303, 476], [282, 594, 465, 538]]);
  bands(svg, [[296, 21, DARK_RED], [384, 23, DARK_RED], [586, 25, DARK_GREEN]]);
  cross(svg, 183, 519, 481.5);

  const d = $('delta-left');
  const dg = add(d, 'g', {});
  candles(dg, points('42,368 55,395 70,385 95,393 103,435 108,490 120,500 135,515 150,510 165,525 | 170,308 175,290 180,240 190,190 197,155 205,125 213,70 222,50 228,115 238,70 250,55 262,80 275,120 293,118 300,145 315,178 330,140 340,155 352,208 372,198 383,225 397,213 410,232 425,245 435,300 445,262 455,295 467,305 475,370 480,395 490,360 505,325 527,338 535,308 548,308 560,320 572,335 585,305 598,297 612,322 622,388 632,362 652,365 665,318 680,300 695,250 705,308 720,270 730,240 743,235 748,175 758,190 770,212 780,190 785,125 795,175 810,195 815,145 827,155 835,125 850,115 858,140 870,105 885,135 900,118', [-8, -20], third), 2.6, '#32cd32', '#f00', 9);
  cross(d, 183, 0);
  add(d, 'text', { x: 2, y: 16 }, 'Order Flow Cumulative Delta(ZS NOV23 (1500 Tick),Up Down Tick,Session,0)');
  add(d, 'text', { x: 2, y: 160 }, '© 2023 NinjaTrader, LLC');

  const t = $('time-left');
  for (const x of [27, 59, 116, 137, 148, 203, 234, 292, 346, 378, 435]) add(t, 'rect', { x, y: 0, width: 1, height: 3, fill: '#999' });
  [[59, 'Sep 1'], [138, 'Sep 4'], [235, 'Sep 6'], [293, '12:02'], [378, 'Sep 7'], [436, '04:19']].forEach(([x, s]) => add(t, 'text', { x, y: 18, 'text-anchor': 'middle' }, s));
  add(t, 'rect', { x: 156, y: 3, width: 56, height: 20, fill: '#d3d3d3' });
  add(t, 'text', { x: 184, y: 18, 'text-anchor': 'middle', class: 'dark' }, '10:49:26');
}

// ---- drawing toolbars ----
const tools = ['ruler', 'updown', 'segment', 'elbow', 'lines', 'parallel', 'circle', 'rect', 'profile', 'slider', 'mountain', 'pencil', 'pencil', 'pencil'];
for (const id of ['tools-left', 'tools-right']) {
  (id === 'tools-left' ? tools.slice(0, 13) : tools).forEach(n => {
    const b = document.createElement('button');
    b.setAttribute('aria-label', n);
    add(add(b, 'svg', {}), 'use', { href: '#' + n });
    $(id).appendChild(b);
  });
}
```
